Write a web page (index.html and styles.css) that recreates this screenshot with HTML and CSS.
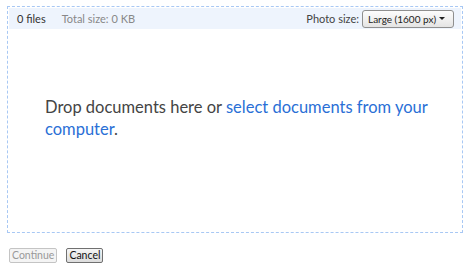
FILE: index.html
```html
<!DOCTYPE html>
<html>
<head>
<title>Upload documents</title>
<link rel="stylesheet" href="styles.css">
</head>
<body>
<div class="upload-box">
<div class="upload-header">
<span class="file-count">0 files</span>
<span class="total-size">Total size: 0 KB</span>
<span class="spacer"></span>
<label class="photo-label" for="photo-size">Photo size:</label>
<div class="select-box" id="photo-size">
<span class="select-text">Large (1600 px)</span>
<span class="arrow"></span>
</div>
</div>
<div class="drop-area">
<p>Drop documents here or <a href="#">select documents from your computer</a>.</p>
</div>
</div>
<div class="actions">
<button class="btn" disabled>Continue</button>
<button class="btn btn-cancel">Cancel</button>
</div>
</body>
</html>
```

FILE: styles.css
```css
body{
margin:6px 5px 0 7px;
font-family:Lato,"Noto Sans",sans-serif;
background:#fff;
color:#444;
}
.upload-box{
border:1px dashed #a8c8f4;
height:224px;
display:flex;
flex-direction:column;
padding:1px 1px 0 1px;
}
.upload-header{
background:#eef4fd;
height:21px;
display:flex;
align-items:center;
padding:0 7px 0 8px;
font-size:11px;
white-space:nowrap;
}
.file-count{
color:#333;
margin-right:16px;
}
.total-size{
color:#888;
}
.spacer{
flex:1;
}
.photo-label{
color:#444;
margin-right:3px;
}
.select-box{
width:92px;
flex-shrink:0;
height:18px;
border:1px solid #8f8f8f;
border-radius:3px;
background:linear-gradient(to bottom,#fdfdfd,#e4e4e4);
display:flex;
align-items:center;
padding-left:5px;
box-sizing:border-box;
color:#222;
font-size:10px;
}
.select-text{
flex:1;
}
.arrow{
width:0;
height:0;
border-left:3px solid transparent;
border-right:3px solid transparent;
border-top:3px solid #222;
margin:0 8px 0 2px;
}
.drop-area{
flex:1;
padding:67px 28px 0 36px;
}
.drop-area p{
margin:0;
font-size:16.5px;
line-height:22px;
color:#444;
}
.drop-area a{
color:#2a6fd6;
text-decoration:none;
}
.actions{
margin-top:15px;
display:flex;
gap:9px;
padding-left:2px;
}
.btn{
font-family:Lato,"Noto Sans",sans-serif;
font-size:10.5px;
height:15px;
padding:0 2px;
line-height:13px;
border:1px solid #707070;
border-radius:2px;
background:linear-gradient(to bottom,#f6f6f6,#dcdcdc);
color:#111;
}
.btn:disabled{
border-color:#c4c4c4;
background:#f4f4f4;
color:#999;
}
```
